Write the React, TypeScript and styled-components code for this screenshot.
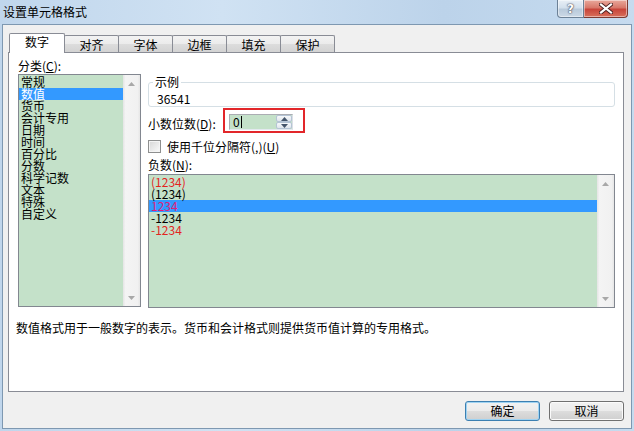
import React from "react";
import styled, { createGlobalStyle } from "styled-components";

const FONT = `"Noto Sans CJK SC", "Noto Sans", sans-serif`;
const GREEN = "#c4e1c9";

const GlobalStyle = createGlobalStyle`
  html, body { margin: 0; padding: 0; background: #fff; }
  * { box-sizing: border-box; }
`;

const Window = styled.div`
  width: 634px;
  height: 431px;
  display: flex;
  flex-direction: column;
  padding: 0 2px 2px 2px;
  background: linear-gradient(90deg, #c0d6ec 0%, #d0e2f3 35%, #bcd3ea 70%, #c6dbef 100%);
  font-family: ${FONT};
  font-size: 12px;
  color: #000;
`;

const TitleBar = styled.div`
  height: 24px;
  display: flex;
  align-items: flex-start;
`;

const Title = styled.div`
  flex: 1;
  padding: 4px 0 0 1px;
  line-height: 16px;
`;

const CaptionButtons = styled.div`
  display: flex;
  margin-right: 4px;
`;

const CaptionButton = styled.div<{ $close?: boolean }>`
  width: ${(p) => (p.$close ? 44 : 27)}px;
  height: 18px;
  display: flex;
  align-items: center;
  justify-content: center;
  border: 1px solid ${(p) => (p.$close ? "#7b3a32" : "#6c8196")};
  border-top: none;
  ${(p) => (p.$close ? "border-left: none;" : "")}
  border-radius: ${(p) => (p.$close ? "0 0 4px 0" : "0 0 0 4px")};
  background: ${(p) =>
    p.$close
      ? "linear-gradient(#e9a99c 0%, #d8786a 45%, #c8453a 55%, #d8705c 100%)"
      : "linear-gradient(#e8eff6 0%, #d3e0ec 45%, #b9cadb 55%, #cbd9e6 100%)"};
  box-shadow: inset 0 0 0 1px rgba(255, 255, 255, 0.45);
  color: #fff;
  font-family: "DejaVu Sans", sans-serif;
  font-weight: bold;
  font-size: 12px;
  text-shadow: 0 0 2px #334, 0 0 1px #334;
`;

const Client = styled.div`
  flex: 1;
  border: 1px solid #7e98b1;
  background: #f0f0f0;
  display: flex;
  flex-direction: column;
  padding: 8px 7px 0 5px;
`;

const TabStrip = styled.div`
  display: flex;
  align-items: flex-end;
  height: 19px;
  padding-left: 1px;
`;

const Tab = styled.div<{ $active?: boolean }>`
  position: relative;
  z-index: ${(p) => (p.$active ? 2 : 1)};
  width: ${(p) => (p.$active ? 56 : 55)}px;
  height: ${(p) => (p.$active ? 20 : 17)}px;
  margin-bottom: ${(p) => (p.$active ? -1 : 0)}px;
  margin-left: ${(p) => (p.$active ? 0 : -1)}px;
  padding-top: ${(p) => (p.$active ? 2 : 3)}px;
  border: 1px solid #898c95;
  border-bottom: none;
  border-radius: 2px 2px 0 0;
  text-align: center;
  line-height: 12px;
  background: ${(p) =>
    p.$active
      ? "#fff"
      : "linear-gradient(#f3f3f3 0%, #ebebeb 50%, #dddddd 50%, #d3d3d3 100%)"};
`;

const Panel = styled.div`
  height: 340px;
  border: 1px solid #898c95;
  background: #fff;
  padding: 7px 8px 0 9px;
  display: flex;
  flex-direction: column;
`;

const Columns = styled.div`
  display: grid;
  grid-template-columns: 123px 467px;
  column-gap: 7px;
`;

const Column = styled.div<{ $top?: number }>`
  display: flex;
  flex-direction: column;
  padding-top: ${(p) => p.$top || 0}px;
`;

const Label = styled.div<{ $mt?: number }>`
  line-height: 12px;
  height: 12px;
  white-space: nowrap;
  margin-top: ${(p) => p.$mt || 0}px;
`;

const ListBox = styled.div<{ $h: number; $mt: number }>`
  height: ${(p) => p.$h}px;
  margin-top: ${(p) => p.$mt}px;
  border: 1px solid #828790;
  background: ${GREEN};
  display: flex;
  overflow: hidden;
`;

const ListItems = styled.div`
  flex: 1;
  min-width: 0;
  padding-top: 1px;
`;

const ListItem = styled.div<{ $selected?: boolean; $color?: string }>`
  height: 12px;
  line-height: 12px;
  padding-left: 2px;
  white-space: nowrap;
  color: ${(p) => (p.$color ? p.$color : p.$selected ? "#fff" : "#000")};
  background: ${(p) => (p.$selected ? "#3399ff" : "transparent")};
`;

const ScrollBar = styled.div`
  width: 17px;
  display: flex;
  flex-direction: column;
  justify-content: space-between;
  background: linear-gradient(90deg, #e4e4e4 0%, #f4f4f4 15%, #f1f1f1 85%, #e6e6e6 100%);
`;

const ScrollArrow = styled.div`
  height: 17px;
  display: flex;
  align-items: center;
  justify-content: center;
`;

const Group = styled.fieldset`
  margin: 0;
  border: 1px solid #d5dfe5;
  border-radius: 3px;
  padding: 5px 8px 1px 8px;
  min-width: 0;
`;

const Legend = styled.legend`
  padding: 0 2px;
  margin-left: -4px;
  line-height: 12px;
  font-size: 12px;
`;

const SampleText = styled.div`
  line-height: 12px;
  height: 12px;
`;

const SpinRow = styled.div`
  display: flex;
  align-items: flex-start;
  margin-top: 1px;
  height: 25px;
`;

const SpinLabel = styled.div`
  margin-top: 10px;
  width: 75px;
  line-height: 12px;
  white-space: nowrap;
`;

const Highlight = styled.div`
  border: 2px solid #e2262a;
  padding: 4px 10px 1px 4px;
`;

const SpinField = styled.div`
  width: 64px;
  height: 16px;
  border: 1px solid #abadb3;
  border-right-color: #dbdfe6;
  border-bottom-color: #e3e9ef;
  background: ${GREEN};
  display: flex;
`;

const SpinValue = styled.div`
  flex: 1;
  padding-left: 3px;
  line-height: 14px;
  display: flex;
  align-items: center;
`;

const Caret = styled.span`
  display: inline-block;
  width: 1px;
  height: 12px;
  background: #000;
  margin-left: 1px;
`;

const SpinButtons = styled.div`
  width: 16px;
  display: flex;
  flex-direction: column;
`;

const SpinButton = styled.div`
  flex: 1;
  display: flex;
  align-items: center;
  justify-content: center;
  border: 1px solid #b5c4d5;
  border-radius: 2px;
  background: linear-gradient(#f7f9fb, #dfe5ec);
`;

const CheckRow = styled.div`
  display: flex;
  align-items: center;
  margin-top: 7px;
  height: 13px;
`;

const CheckBox = styled.div`
  width: 13px;
  height: 13px;
  border: 1px solid #8e8f8f;
  box-shadow: inset 0 0 0 1px #f4f4f4;
  background: linear-gradient(135deg, #d6d6d6 0%, #ececec 60%, #fafafa 100%);
  margin-right: 6px;
`;

const CheckLabel = styled.div`
  line-height: 12px;
  white-space: nowrap;
`;

const Description = styled.div`
  margin-top: 14px;
  margin-left: -2px;
  line-height: 12px;
  white-space: nowrap;
`;

const ButtonRow = styled.div`
  display: flex;
  justify-content: flex-end;
  gap: 9px;
  padding-top: 9px;
`;

const Button = styled.div<{ $default?: boolean }>`
  width: 75px;
  height: 20px;
  border: 1px solid ${(p) => (p.$default ? "#3c7fb1" : "#707070")};
  border-radius: 3px;
  display: flex;
  align-items: center;
  justify-content: center;
  line-height: 12px;
  background: linear-gradient(#f2f2f2 0%, #ebebeb 50%, #dddddd 51%, #cfcfcf 100%);
  box-shadow: inset 0 0 0 1px ${(p) => (p.$default ? "#9fd3f2" : "#fbfbfb")};
`;

const Arrow = ({ up, color = "#a8a8a8" }: { up?: boolean; color?: string }) => (
  <svg width="7" height="4" viewBox="0 0 7 4">
    <path d={up ? "M0 4 L3.5 0 L7 4 Z" : "M0 0 L3.5 4 L7 0 Z"} fill={color} />
  </svg>
);

const Scroll = () => (
  <ScrollBar>
    <ScrollArrow>
      <Arrow up />
    </ScrollArrow>
    <ScrollArrow>
      <Arrow />
    </ScrollArrow>
  </ScrollBar>
);

const categories = [
  "常规",
  "数值",
  "货币",
  "会计专用",
  "日期",
  "时间",
  "百分比",
  "分数",
  "科学记数",
  "文本",
  "特殊",
  "自定义",
];

const negatives: { text: string; color?: string; selected?: boolean }[] = [
  { text: "(1234)", color: "#e3241f" },
  { text: "(1234)" },
  { text: "1234", color: "#e0207a", selected: true },
  { text: "-1234" },
  { text: "-1234", color: "#e3241f" },
];

const tabs = ["数字", "对齐", "字体", "边框", "填充", "保护"];

export default function App() {
  return (
    <>
      <GlobalStyle />
      <Window>
        <TitleBar>
          <Title>设置单元格格式</Title>
          <CaptionButtons>
            <CaptionButton>?</CaptionButton>
            <CaptionButton $close>
              <svg width="14" height="11" viewBox="0 0 14 11">
                <path
                  d="M2 1.5 L12 9.5 M12 1.5 L2 9.5"
                  stroke="#4a2020"
                  strokeWidth="4"
                  strokeLinecap="square"
                />
                <path
                  d="M2 1.5 L12 9.5 M12 1.5 L2 9.5"
                  stroke="#fff"
                  strokeWidth="2.2"
                  strokeLinecap="square"
                />
              </svg>
            </CaptionButton>
          </CaptionButtons>
        </TitleBar>
        <Client>
          <TabStrip>
            {tabs.map((t, i) => (
              <Tab key={t} $active={i === 0}>
                {t}
              </Tab>
            ))}
          </TabStrip>
          <Panel>
            <Columns>
              <Column>
                <Label>
                  分类(<u>C</u>):
                </Label>
                <ListBox $h={233} $mt={2}>
                  <ListItems>
                    {categories.map((c, i) => (
                      <ListItem key={c} $selected={i === 1}>
                        {c}
                      </ListItem>
                    ))}
                  </ListItems>
                  <Scroll />
                </ListBox>
              </Column>
              <Column $top={16}>
                <Group>
                  <Legend>示例</Legend>
                  <SampleText>36541</SampleText>
                </Group>
                <SpinRow>
                  <SpinLabel>
                    小数位数(<u>D</u>):
                  </SpinLabel>
                  <Highlight>
                    <SpinField>
                      <SpinValue>
                        0<Caret />
                      </SpinValue>
                      <SpinButtons>
                        <SpinButton>
                          <Arrow up color="#44546a" />
                        </SpinButton>
                        <SpinButton>
                          <Arrow color="#44546a" />
                        </SpinButton>
                      </SpinButtons>
                    </SpinField>
                  </Highlight>
                </SpinRow>
                <CheckRow>
                  <CheckBox />
                  <CheckLabel>
                    使用千位分隔符(,)(<u>U</u>)
                  </CheckLabel>
                </CheckRow>
                <Label $mt={6}>
                  负数(<u>N</u>):
                </Label>
                <ListBox $h={134} $mt={3}>
                  <ListItems>
                    {negatives.map((n, i) => (
                      <ListItem key={i} $selected={n.selected} $color={n.color}>
                        {n.text}
                      </ListItem>
                    ))}
                  </ListItems>
                  <Scroll />
                </ListBox>
              </Column>
            </Columns>
            <Description>
              数值格式用于一般数字的表示。货币和会计格式则提供货币值计算的专用格式。
            </Description>
          </Panel>
          <ButtonRow>
            <Button $default>确定</Button>
            <Button>取消</Button>
          </ButtonRow>
        </Client>
      </Window>
    </>
  );
}
